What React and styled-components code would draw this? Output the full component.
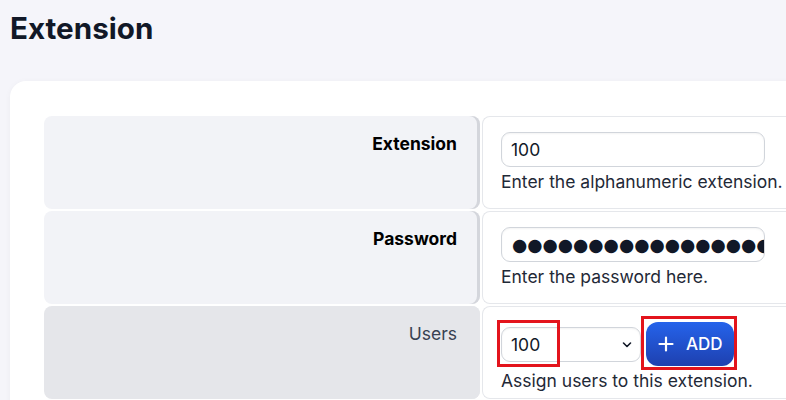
import React from "react";
import styled, { createGlobalStyle } from "styled-components";

const Global = createGlobalStyle`
  html, body { margin: 0; padding: 0; }
  body {
    background: #f5f5fa;
    font-family: Inter, "Noto Sans", sans-serif;
    color: #111827;
    overflow: hidden;
    width: 786px;
    height: 400px;
  }
`;

const Page = styled.div`
  padding: 9px 0 0 10px;
`;

const Title = styled.h1`
  margin: 0;
  font-size: 29.6px;
  line-height: 38px;
  font-weight: 700;
  color: #111827;
`;

const Card = styled.div`
  margin-top: 34px;
  width: 900px;
  background: #ffffff;
  border-radius: 16px;
  box-shadow: 0 1px 6px rgba(17, 24, 39, 0.04);
  padding: 35px 0 40px 34px;
`;

const Grid = styled.div`
  display: grid;
  grid-template-columns: 436px 1fr;
  row-gap: 2px;
  column-gap: 2px;
`;

const LabelCell = styled.div`
  background: ${(p) => (p.$active ? "#e5e6ea" : "#f2f3f7")};
  border-radius: 8px;
  box-shadow: inset -3px 0 0 ${(p) => (p.$active ? "#e5e6ea" : "#d4d6dc")};
  text-align: right;
  padding: 17px 23px 0 0;
  min-height: 93px;
  box-sizing: border-box;
  font-size: 17.5px;
  line-height: 22px;
  font-weight: ${(p) => (p.$bold ? 700 : 400)};
  color: ${(p) => (p.$bold ? "#000000" : "#374151")};
`;

const ValueCell = styled.div`
  border: 1px solid #e5e7eb;
  border-right: none;
  border-radius: 8px 0 0 8px;
  padding: 15px 0 0 18px;
  box-sizing: border-box;
  min-height: 93px;
`;

const TextInput = styled.input`
  display: block;
  box-sizing: border-box;
  width: 264px;
  height: 35px;
  border: 1px solid #d1d5db;
  border-radius: 9px;
  background: #ffffff;
  padding: 0 9px;
  font-family: Inter, "Noto Sans", sans-serif;
  font-size: 17.5px;
  color: #111827;
  box-shadow: inset 0 1px 2px rgba(0, 0, 0, 0.05);
  outline: none;
`;

const MaskedInput = styled(TextInput)`
  font-family: "DejaVu Sans", sans-serif;
  padding: 0 0 0 10px;
  letter-spacing: 0;
`;

const Help = styled.div`
  margin-top: 4px;
  font-size: 17.5px;
  line-height: 22px;
  color: #1f2937;
  white-space: nowrap;
`;

const Controls = styled.div`
  position: relative;
  display: flex;
  align-items: center;
  gap: 5px;
`;

const SelectWrap = styled.div`
  position: relative;
  width: 140px;
  height: 35px;
`;

const Select = styled.select`
  appearance: none;
  -webkit-appearance: none;
  width: 100%;
  height: 100%;
  box-sizing: border-box;
  border: 1px solid #d1d5db;
  border-radius: 9px;
  background: #ffffff;
  padding: 0 28px 0 9px;
  font-family: Inter, "Noto Sans", sans-serif;
  font-size: 17.5px;
  color: #111827;
  box-shadow: inset 0 1px 2px rgba(0, 0, 0, 0.05);
  outline: none;
`;

const Chevron = styled.svg`
  position: absolute;
  right: 8px;
  top: 14px;
  pointer-events: none;
`;

const AddButton = styled.button`
  display: flex;
  align-items: center;
  gap: 12px;
  height: 44px;
  width: 88px;
  box-sizing: border-box;
  padding: 0 0 0 12px;
  border: none;
  border-radius: 12px;
  background: linear-gradient(180deg, #2563eb 0%, #1e40af 100%);
  color: #ffffff;
  font-family: Inter, "Noto Sans", sans-serif;
  font-size: 17px;
  font-weight: 500;
  cursor: pointer;
`;

const Mark = styled.div`
  position: absolute;
  left: ${(p) => p.$x}px;
  top: ${(p) => p.$y}px;
  width: ${(p) => p.$w}px;
  height: ${(p) => p.$h}px;
  box-sizing: border-box;
  border: 3px solid #e3141c;
  pointer-events: none;
`;

const MASK = "\u25CF".repeat(24);

export default function App() {
  return (
    <>
      <Global />
      <Page>
        <Title>Extension</Title>
        <Card>
          <Grid>
            <LabelCell $bold>Extension</LabelCell>
            <ValueCell>
              <TextInput type="text" defaultValue="100" />
              <Help>Enter the alphanumeric extension.</Help>
            </ValueCell>

            <LabelCell $bold>Password</LabelCell>
            <ValueCell>
              <MaskedInput type="text" readOnly aria-label="Password" defaultValue={MASK} />
              <Help>Enter the password here.</Help>
            </ValueCell>

            <LabelCell $active>Users</LabelCell>
            <ValueCell>
              <Controls>
                <SelectWrap>
                  <Select defaultValue="100">
                    <option value="100">100</option>
                  </Select>
                  <Chevron width="12" height="8" viewBox="0 0 12 8">
                    <path d="M2.5 2l3.5 3.5 3.5-3.5" fill="none" stroke="#111827" strokeWidth="1.6" strokeLinecap="round" strokeLinejoin="round" />
                  </Chevron>
                </SelectWrap>
                <AddButton>
                  <svg width="16" height="16" viewBox="0 0 16 16">
                    <path d="M8 1.5v13M1.5 8h13" stroke="#ffffff" strokeWidth="2.2" strokeLinecap="round" />
                  </svg>
                  ADD
                </AddButton>
                <Mark $x={-4} $y={-2} $w={63} $h={47} />
                <Mark $x={140} $y={-6} $w={96} $h={54} />
              </Controls>
              <Help>Assign users to this extension.</Help>
            </ValueCell>
          </Grid>
        </Card>
      </Page>
    </>
  );
}
